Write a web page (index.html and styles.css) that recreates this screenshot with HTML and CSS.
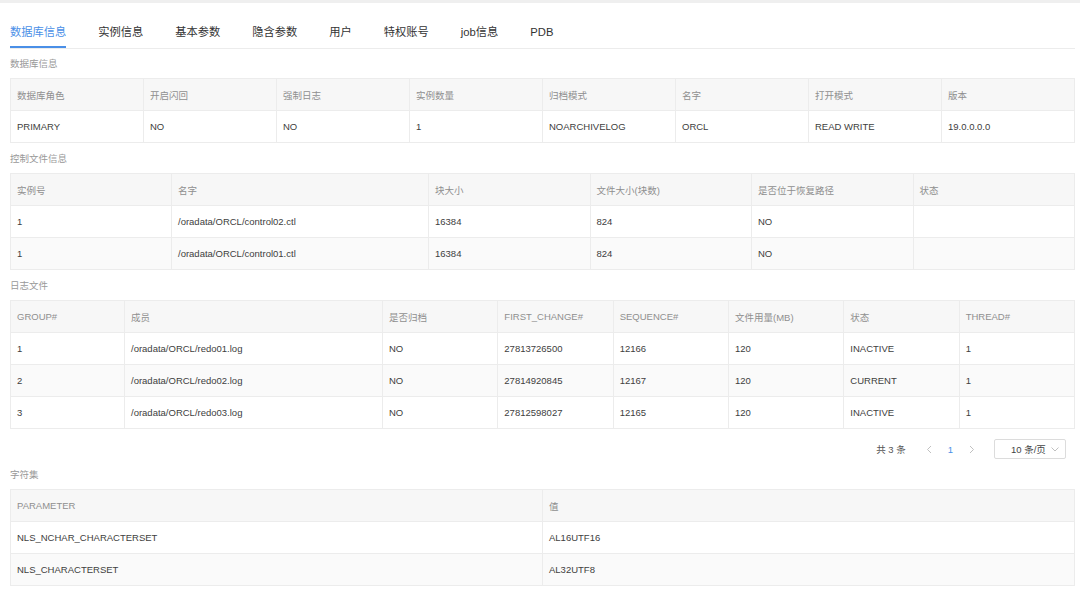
FILE: index.html
```html
<!DOCTYPE html>
<html lang="zh-CN">
<head>
    <meta charset="UTF-8">
    <meta name="viewport" content="width=device-width, initial-scale=1.0">
    <title>数据库信息</title>
    <link rel="stylesheet" href="styles.css">
</head>
<body>
    <div class="topbar"></div>

    <div class="page">
        <div class="tabs">
            <div class="tab active">数据库信息</div>
            <div class="tab">实例信息</div>
            <div class="tab">基本参数</div>
            <div class="tab">隐含参数</div>
            <div class="tab">用户</div>
            <div class="tab">特权账号</div>
            <div class="tab">job信息</div>
            <div class="tab">PDB</div>
        </div>

        <!-- 数据库信息 -->
        <div class="section-title first">数据库信息</div>
        <table class="grid">
            <thead>
                <tr>
                    <th>数据库角色</th>
                    <th>开启闪回</th>
                    <th>强制日志</th>
                    <th>实例数量</th>
                    <th>归档模式</th>
                    <th>名字</th>
                    <th>打开模式</th>
                    <th>版本</th>
                </tr>
            </thead>
            <tbody>
                <tr>
                    <td>PRIMARY</td>
                    <td>NO</td>
                    <td>NO</td>
                    <td>1</td>
                    <td>NOARCHIVELOG</td>
                    <td>ORCL</td>
                    <td>READ WRITE</td>
                    <td>19.0.0.0.0</td>
                </tr>
            </tbody>
        </table>

        <!-- 控制文件信息 -->
        <div class="section-title">控制文件信息</div>
        <table class="grid">
            <thead>
                <tr>
                    <th class="ctl-id">实例号</th>
                    <th class="ctl-name">名字</th>
                    <th>块大小</th>
                    <th>文件大小(块数)</th>
                    <th>是否位于恢复路径</th>
                    <th>状态</th>
                </tr>
            </thead>
            <tbody>
                <tr>
                    <td>1</td>
                    <td>/oradata/ORCL/control02.ctl</td>
                    <td>16384</td>
                    <td>824</td>
                    <td>NO</td>
                    <td></td>
                </tr>
                <tr>
                    <td>1</td>
                    <td>/oradata/ORCL/control01.ctl</td>
                    <td>16384</td>
                    <td>824</td>
                    <td>NO</td>
                    <td></td>
                </tr>
            </tbody>
        </table>

        <!-- 日志文件 -->
        <div class="section-title">日志文件</div>
        <table class="grid">
            <thead>
                <tr>
                    <th class="log-group">GROUP#</th>
                    <th class="log-member">成员</th>
                    <th>是否归档</th>
                    <th>FIRST_CHANGE#</th>
                    <th>SEQUENCE#</th>
                    <th>文件用量(MB)</th>
                    <th>状态</th>
                    <th>THREAD#</th>
                </tr>
            </thead>
            <tbody>
                <tr>
                    <td>1</td>
                    <td>/oradata/ORCL/redo01.log</td>
                    <td>NO</td>
                    <td>27813726500</td>
                    <td>12166</td>
                    <td>120</td>
                    <td>INACTIVE</td>
                    <td>1</td>
                </tr>
                <tr>
                    <td>2</td>
                    <td>/oradata/ORCL/redo02.log</td>
                    <td>NO</td>
                    <td>27814920845</td>
                    <td>12167</td>
                    <td>120</td>
                    <td>CURRENT</td>
                    <td>1</td>
                </tr>
                <tr>
                    <td>3</td>
                    <td>/oradata/ORCL/redo03.log</td>
                    <td>NO</td>
                    <td>27812598027</td>
                    <td>12165</td>
                    <td>120</td>
                    <td>INACTIVE</td>
                    <td>1</td>
                </tr>
            </tbody>
        </table>

        <div class="pagination">
            <span class="total">共 3 条</span>
            <span class="pager-arrow">
                <svg width="6" height="9" viewBox="0 0 6 9"><path d="M5 1 L1.5 4.5 L5 8" fill="none" stroke="#c0c0c0" stroke-width="1"/></svg>
            </span>
            <span class="pager-num">1</span>
            <span class="pager-arrow">
                <svg width="6" height="9" viewBox="0 0 6 9"><path d="M1 1 L4.5 4.5 L1 8" fill="none" stroke="#c0c0c0" stroke-width="1"/></svg>
            </span>
            <div class="page-size">
                <span>10 条/页</span>
                <svg width="8" height="5" viewBox="0 0 8 5"><path d="M0.5 0.5 L4 4 L7.5 0.5" fill="none" stroke="#c0c0c0" stroke-width="1"/></svg>
            </div>
        </div>

        <!-- 字符集 -->
        <div class="section-title">字符集</div>
        <table class="grid">
            <thead>
                <tr>
                    <th>PARAMETER</th>
                    <th>值</th>
                </tr>
            </thead>
            <tbody>
                <tr>
                    <td>NLS_NCHAR_CHARACTERSET</td>
                    <td>AL16UTF16</td>
                </tr>
                <tr>
                    <td>NLS_CHARACTERSET</td>
                    <td>AL32UTF8</td>
                </tr>
            </tbody>
        </table>
    </div>
</body>
</html>
```

FILE: styles.css
```css
body {
    margin: 0;
    background: #fff;
    font-family: "Liberation Sans", "Noto Sans CJK SC", sans-serif;
    color: #333;
}

.topbar {
    height: 3px;
    background: #efefef;
}

.page {
    padding: 0 5px 0 10px;
}

/* Tabs */
.tabs {
    display: flex;
    gap: 32px;
    border-bottom: 1px solid #ececec;
}

.tab {
    font-size: 11.25px;
    line-height: 16px;
    padding: 21px 0 6px;
    border-bottom: 2px solid transparent;
    color: #333;
}

.tab.active {
    color: #4a8fe7;
    border-bottom-color: #4a8fe7;
}

/* Section titles */
.section-title {
    font-size: 9.5px;
    line-height: 14px;
    color: #999;
    margin: 9px 0 7px;
}

.section-title.first {
    margin-top: 8px;
}

/* Tables */
.grid {
    width: 100%;
    border-collapse: collapse;
    table-layout: fixed;
    border: 1px solid #e8e8e8;
    font-size: 9.5px;
}

.grid th,
.grid td {
    height: 32px;
    padding: 0 6px;
    text-align: left;
    border: 1px solid #ececec;
    box-sizing: border-box;
    white-space: nowrap;
}

.grid td {
    color: #404040;
}

.grid th {
    background: #f7f7f7;
    color: #8f8f8f;
    font-weight: normal;
}

.grid tbody tr:nth-child(even) td {
    background: #fafafa;
}

.ctl-id { width: 161px; }
.ctl-name { width: 257px; }
.log-group { width: 114px; }
.log-member { width: 258px; }

/* Pagination */
.pagination {
    display: flex;
    justify-content: flex-end;
    align-items: center;
    margin: 10px 9px 0 0;
    font-size: 9.5px;
    color: #555;
}

.total {
    margin-right: 20px;
}

.pager-arrow {
    display: flex;
    align-items: center;
}

.pager-num {
    color: #4a8fe7;
    margin: 0 16px;
}

.page-size {
    display: flex;
    align-items: center;
    justify-content: space-between;
    box-sizing: border-box;
    width: 72px;
    height: 20px;
    margin-left: 19px;
    padding: 0 6px 0 16px;
    border: 1px solid #dcdcdc;
    border-radius: 2px;
    color: #444;
}
```
